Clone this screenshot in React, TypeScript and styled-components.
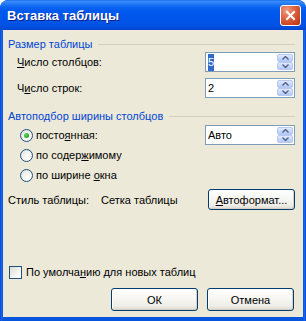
import React from "react";
import styled, { createGlobalStyle } from "styled-components";

const Global = createGlobalStyle`
  html, body { margin: 0; padding: 0; background: #ffffff; }
  body { font-family: "Liberation Sans", Arial, sans-serif; font-size: 11px; }
`;

const Window = styled.div`
  width: 306px;
  height: 321px;
  box-sizing: border-box;
  display: flex;
  flex-direction: column;
  border-radius: 8px 8px 0 0;
  background: linear-gradient(to right, #0831d9 0, #166aee 1px, #0855dd 3px, #0855dd calc(100% - 3px), #166aee calc(100% - 1px), #0831d9 100%);
  overflow: hidden;
`;

const TitleBar = styled.div`
  height: 30px;
  flex: none;
  display: flex;
  align-items: center;
  justify-content: space-between;
  padding: 0 4px 0 7px;
  box-sizing: border-box;
  background: linear-gradient(to bottom, #0a5ee8 0, #3d8ff8 1px, #2b82f9 3px, #0b64f0 7px, #0058ee 12px, #0056ea 60%, #0052e2 85%, #0046d2 100%);
  border-radius: 8px 8px 0 0;
`;

const Title = styled.span`
  color: #ffffff;
  font-family: "Liberation Sans", Arial, sans-serif;
  font-weight: bold;
  font-size: 13px;
  text-shadow: 1px 1px 0 #0a1e8a;
  padding-top: 1px;
`;

const CloseButton = styled.div`
  width: 21px;
  height: 21px;
  box-sizing: border-box;
  border: 1px solid #ffffff;
  border-radius: 3px;
  background: radial-gradient(circle at 30% 25%, #f0a08a 0, #e26a48 35%, #c8401c 80%, #b33312 100%);
  display: flex;
  align-items: center;
  justify-content: center;
  margin-top: 1px;
  margin-right: 1px;
`;

const Body = styled.div`
  flex: 1;
  margin: 0 3px 4px 3px;
  background: #ece9d8;
  padding: 6px 8px 6px 5px;
  display: flex;
  flex-direction: column;
`;

const GroupHeader = styled.div<{ $top?: number }>`
  display: flex;
  align-items: center;
  height: 16px;
  margin-top: ${(p) => p.$top ?? 0}px;
  color: #0046d5;
  &::after {
    content: "";
    flex: 1;
    height: 1px;
    background: #d0d0bf;
    margin-left: 6px;
  }
`;

const FieldRow = styled.div<{ $top?: number }>`
  display: flex;
  align-items: center;
  justify-content: space-between;
  height: 20px;
  margin-top: ${(p) => p.$top ?? 0}px;
  padding-left: 9px;
  color: #000;
`;

const Spin = styled.div`
  width: 90px;
  height: 20px;
  box-sizing: border-box;
  border: 1px solid #7f9db9;
  background: #fff;
  display: flex;
  align-items: stretch;
  color: #000;
`;

const SpinText = styled.div`
  flex: 1;
  display: flex;
  align-items: center;
  padding-left: 2px;
`;

const Selected = styled.span`
  background: #316ac5;
  color: #fff;
  padding: 2px 0 3px;
`;

const SpinButtons = styled.div`
  width: 16px;
  display: flex;
  flex-direction: column;
  padding: 1px 1px 1px 0;
`;

const SpinBtn = styled.div`
  flex: 1;
  border-radius: 2px;
  border: 1px solid #b7c9f3;
  background: linear-gradient(to bottom, #e1eafe 0, #c5d5fb 60%, #b4c8f6 100%);
  display: flex;
  align-items: center;
  justify-content: center;
`;

const RadioRow = styled.div<{ $top?: number }>`
  display: flex;
  align-items: center;
  justify-content: space-between;
  height: 20px;
  margin-top: ${(p) => p.$top ?? 0}px;
  padding-left: 12px;
`;

const RadioLabel = styled.div`
  display: flex;
  align-items: center;
  gap: 3px;
`;

const RadioCircle = styled.div<{ $checked?: boolean }>`
  width: 13px;
  height: 13px;
  box-sizing: border-box;
  border-radius: 50%;
  border: 1px solid #1c5180;
  background: radial-gradient(circle at 65% 65%, #ffffff 0, #f4f4f0 40%, #dcdcd6 100%);
  display: flex;
  align-items: center;
  justify-content: center;
  &::after {
    content: "";
    display: ${(p) => (p.$checked ? "block" : "none")};
    width: 5px;
    height: 5px;
    border-radius: 50%;
    background: radial-gradient(circle at 35% 35%, #5fe05f 0, #21a121 70%, #178017 100%);
  }
`;

const StyleRow = styled.div`
  display: flex;
  align-items: center;
  height: 21px;
  margin-top: 4px;
`;

const StyleName = styled.span`
  margin-left: 12px;
  flex: 1;
`;

const XpButton = styled.div<{ $w?: number }>`
  width: ${(p) => p.$w ?? 87}px;
  height: 100%;
  box-sizing: border-box;
  border: 1px solid #003c74;
  border-radius: 3px;
  background: linear-gradient(to bottom, #ffffff 0, #f7f7f4 40%, #efeee8 80%, #dcd8cc 100%);
  box-shadow: inset -1px -1px 0 #d6d0c5, inset 1px 1px 0 #ffffff;
  display: flex;
  align-items: center;
  justify-content: center;
  color: #000;
`;

const Spacer = styled.div`
  flex: 1;
`;

const CheckRow = styled.div`
  display: flex;
  align-items: center;
  gap: 4px;
  height: 16px;
  padding-left: 1px;
`;

const CheckBox = styled.div`
  width: 13px;
  height: 13px;
  box-sizing: border-box;
  border: 1px solid #1c5180;
  background: linear-gradient(135deg, #dcdcd6 0, #f4f4f0 60%, #ffffff 100%);
`;

const ButtonRow = styled.div`
  display: flex;
  justify-content: flex-end;
  gap: 9px;
  height: 23px;
  margin-top: 8px;
  padding-right: 1px;
`;

const U = styled.span`
  text-decoration: underline;
  text-underline-offset: 1px;
`;

const Chevron = ({ up }: { up?: boolean }) => (
  <svg width="7" height="4" viewBox="0 0 7 4">
    <path
      d={up ? "M0.5 3.5 L3.5 0.5 L6.5 3.5" : "M0.5 0.5 L3.5 3.5 L6.5 0.5"}
      fill="none"
      stroke="#4d6185"
      strokeWidth="1.4"
    />
  </svg>
);

const Spinner = ({ children }: { children: React.ReactNode }) => (
  <Spin>
    <SpinText>{children}</SpinText>
    <SpinButtons>
      <SpinBtn>
        <Chevron up />
      </SpinBtn>
      <SpinBtn>
        <Chevron />
      </SpinBtn>
    </SpinButtons>
  </Spin>
);

export default function App() {
  return (
    <>
      <Global />
      <Window>
        <TitleBar>
          <Title>Вставка таблицы</Title>
          <CloseButton>
            <svg width="11" height="11" viewBox="0 0 11 11">
              <path d="M2 2 L9 9 M9 2 L2 9" stroke="#ffffff" strokeWidth="2" strokeLinecap="square" />
            </svg>
          </CloseButton>
        </TitleBar>
        <Body>
          <GroupHeader>Размер таблицы</GroupHeader>
          <FieldRow>
            <span>
              <U>Ч</U>исло столбцов:
            </span>
            <Spinner>
              <Selected>5</Selected>
            </Spinner>
          </FieldRow>
          <FieldRow $top={6}>
            <span>
              Ч<U>и</U>сло строк:
            </span>
            <Spinner>2</Spinner>
          </FieldRow>
          <GroupHeader $top={10}>Автоподбор ширины столбцов</GroupHeader>
          <RadioRow $top={1}>
            <RadioLabel>
              <RadioCircle $checked />
              <span>
                посто<U>я</U>нная:
              </span>
            </RadioLabel>
            <Spinner>Авто</Spinner>
          </RadioRow>
          <RadioRow>
            <RadioLabel>
              <RadioCircle />
              <span>
                по содер<U>ж</U>имому
              </span>
            </RadioLabel>
          </RadioRow>
          <RadioRow>
            <RadioLabel>
              <RadioCircle />
              <span>
                по ширине <U>о</U>кна
              </span>
            </RadioLabel>
          </RadioRow>
          <StyleRow>
            <span>Стиль таблицы:</span>
            <StyleName>Сетка таблицы</StyleName>
            <XpButton>
              <span>
                <U>А</U>втоформат...
              </span>
            </XpButton>
          </StyleRow>
          <Spacer />
          <CheckRow>
            <CheckBox />
            <span>
              По умолча<U>н</U>ию для новых таблиц
            </span>
          </CheckRow>
          <ButtonRow>
            <XpButton>ОК</XpButton>
            <XpButton>Отмена</XpButton>
          </ButtonRow>
        </Body>
      </Window>
    </>
  );
}
